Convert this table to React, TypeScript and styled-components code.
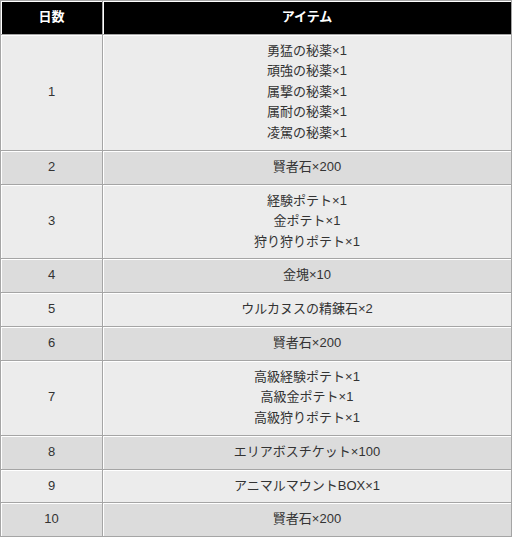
import styled, { createGlobalStyle } from 'styled-components';

const GlobalStyle = createGlobalStyle`
  html, body {
    margin: 0;
    padding: 0;
    background: #fff;
  }
`;

const Table = styled.table`
  width: 512px;
  table-layout: fixed;
  border-collapse: collapse;
  font-family: "Liberation Sans", "Noto Sans CJK JP", sans-serif;
  font-size: 13px;
  line-height: 20.5px;
  color: #333;
`;

const HeadCell = styled.th`
  background: #000;
  color: #fff;
  font-weight: bold;
  text-align: center;
  padding: 6px 4px 6.35px;
  border: 1px solid #a5a5a5;
  box-shadow: inset 1px 1px 0 #fff;
`;

const Cell = styled.td<{ $shade: boolean }>`
  background: ${(p) => (p.$shade ? '#dcdcdc' : '#ececec')};
  text-align: center;
  vertical-align: middle;
  padding: 6px 4px 6.35px;
  border: 1px solid #a5a5a5;
  box-shadow: inset 1px 1px 0 #fff;
`;

const Line = styled.div`
  white-space: nowrap;
`;

const rows: string[][] = [
  ['勇猛の秘薬×1', '頑強の秘薬×1', '属撃の秘薬×1', '属耐の秘薬×1', '凌駕の秘薬×1'],
  ['賢者石×200'],
  ['経験ポテト×1', '金ポテト×1', '狩り狩りポテト×1'],
  ['金塊×10'],
  ['ウルカヌスの精錬石×2'],
  ['賢者石×200'],
  ['高級経験ポテト×1', '高級金ポテト×1', '高級狩りポテト×1'],
  ['エリアボスチケット×100'],
  ['アニマルマウントBOX×1'],
  ['賢者石×200'],
];

export default function App() {
  return (
    <>
      <GlobalStyle />
      <Table>
        <colgroup>
          <col style={{ width: 102 }} />
          <col />
        </colgroup>
        <thead>
          <tr>
            <HeadCell>日数</HeadCell>
            <HeadCell>アイテム</HeadCell>
          </tr>
        </thead>
        <tbody>
          {rows.map((items, i) => (
            <tr key={i}>
              <Cell $shade={i % 2 === 1}>{i + 1}</Cell>
              <Cell $shade={i % 2 === 1}>
                {items.map((item) => (
                  <Line key={item}>{item}</Line>
                ))}
              </Cell>
            </tr>
          ))}
        </tbody>
      </Table>
    </>
  );
}
